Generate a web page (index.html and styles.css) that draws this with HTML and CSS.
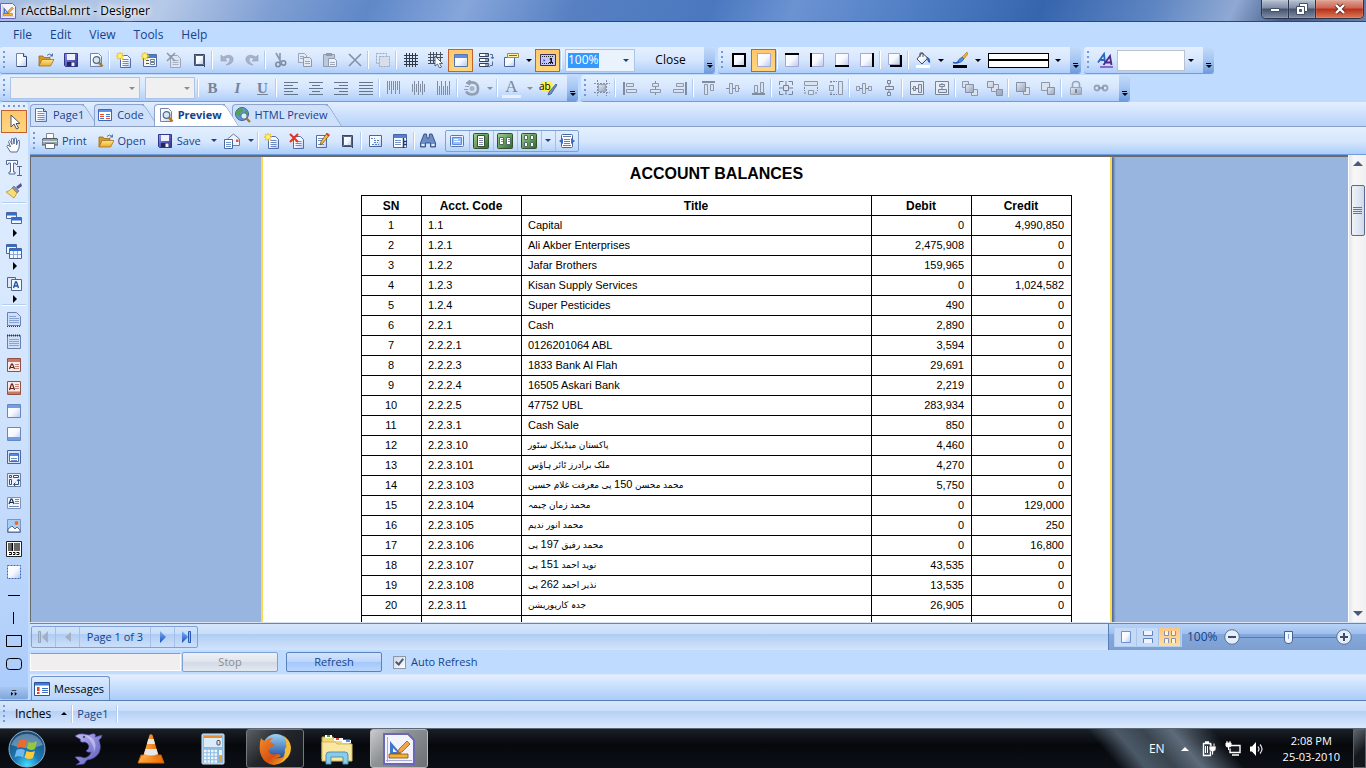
FILE: index.html
```html
<!DOCTYPE html>
<html lang="en">
<head>
    <meta charset="UTF-8">
    <meta name="viewport" content="width=device-width, initial-scale=1.0">
    <title>rAcctBal.mrt - Designer</title>
    <link rel="stylesheet" href="styles.css">
</head>
<body>
    <!-- icon sprite -->
    <svg class="sprite" width="0" height="0" aria-hidden="true">
        <defs>
            <linearGradient id="g-paper" x1="0" y1="0" x2="1" y2="1"><stop offset="0" stop-color="#fff"/><stop offset=".5" stop-color="#f6f9ff"/><stop offset="1" stop-color="#b5c8ea"/></linearGradient>
            <linearGradient id="g-gray" x1="0" y1="0" x2="1" y2="1"><stop offset="0" stop-color="#e6ebf3"/><stop offset="1" stop-color="#97a3b8"/></linearGradient>
            <linearGradient id="g-folder" x1="0" y1="0" x2="0" y2="1"><stop offset="0" stop-color="#ffe58a"/><stop offset="1" stop-color="#e9a92c"/></linearGradient>
            <linearGradient id="g-disk" x1="0" y1="0" x2="1" y2="1"><stop offset="0" stop-color="#8d95ec"/><stop offset="1" stop-color="#2a2f8f"/></linearGradient>
            <linearGradient id="g-blue" x1="0" y1="0" x2="0" y2="1"><stop offset="0" stop-color="#7db0f5"/><stop offset="1" stop-color="#1c4fb8"/></linearGradient>
            <linearGradient id="g-green" x1="0" y1="0" x2="1" y2="1"><stop offset="0" stop-color="#a5d095"/><stop offset="1" stop-color="#27692a"/></linearGradient>
            <radialGradient id="g-orb" cx=".5" cy=".95" r=".9"><stop offset="0" stop-color="#3fe0ff"/><stop offset=".4" stop-color="#1c7ab5"/><stop offset="1" stop-color="#1b4a78"/></radialGradient>
            <linearGradient id="g-dolphin" x1="0" y1="0" x2="1" y2="1"><stop offset="0" stop-color="#c3c0f6"/><stop offset=".5" stop-color="#8683d6"/><stop offset="1" stop-color="#5f5bb5"/></linearGradient>
            <linearGradient id="g-cone" x1="0" y1="0" x2="1" y2="0"><stop offset="0" stop-color="#ffad4d"/><stop offset="1" stop-color="#e76d00"/></linearGradient>
            <linearGradient id="g-sky" x1="0" y1="0" x2="0" y2="1"><stop offset="0" stop-color="#9bd4f7"/><stop offset="1" stop-color="#16408f"/></linearGradient>
            <linearGradient id="g-fox" x1="0" y1="0" x2="1" y2="1"><stop offset="0" stop-color="#f08a2c"/><stop offset=".6" stop-color="#d8500f"/><stop offset="1" stop-color="#f6b22e"/></linearGradient>
        </defs>

        <symbol id="page" viewBox="0 0 16 16"><path d="M3.500 1.500h7l3 3v10h-10z" fill="url(#g-paper)" stroke="#6f83ab"/><path d="M13.500 5v9.500H4" fill="none" stroke="#33466f"/><path d="M10.500 1.500v3h3" fill="#dfe8f7" stroke="#33466f"/></symbol>
        <symbol id="page-lines" viewBox="0 0 16 16"><path d="M2.500 1.500h8l3 3v10h-11z" fill="url(#g-paper)" stroke="#5875ab"/><path d="M10.500 1.500v3h3" fill="#cddcf5" stroke="#3c588f"/><path d="M4.500 4.500h5M4.500 6.500h7M4.500 8.500h7M4.500 10.500h7M4.500 12.500h7" stroke="#7292cc"/></symbol>
        <symbol id="star" viewBox="0 0 16 16"><path d="M4 0v8M0 4h8M1 1l6 6M7 1L1 7" stroke="#efc62a" stroke-width="1.400"/><circle cx="4" cy="4" r="2" fill="#fff27a"/></symbol>
        <symbol id="folder" viewBox="0 0 16 16"><path d="M1 4h4l1 1.500h6V8H4l-3 6z" fill="#d69a2b" stroke="#9b6a16" stroke-width=".8"/><path d="M4 7.500h12L12.500 14H1z" fill="url(#g-folder)" stroke="#a3731c" stroke-width=".8"/><path d="M9 3.500q2-3 5 0" fill="none" stroke="#5b76a5"/><path d="M15 1v3.500h-3.500z" fill="#5b76a5"/></symbol>
        <symbol id="disk" viewBox="0 0 16 16"><path d="M1.500 1.500h13v13h-12l-1-1z" fill="url(#g-disk)" stroke="#31378f"/><path d="M4 2h8v6H4z" fill="#eef1fb"/><path d="M4 10h8v4H4z" fill="#23275f"/><path d="M8.500 10.500h3V14h-3z" fill="#f2f4fb"/></symbol>
        <symbol id="page-find" viewBox="0 0 16 16"><path d="M2.500 1.500h8l3 3v10h-11z" fill="url(#g-paper)" stroke="#6f83ab"/><circle cx="8.500" cy="8" r="3.300" fill="#d4e8f6" stroke="#58677f" stroke-width="1.200"/><path d="M11 10.500l3.500 4" stroke="#b0762a" stroke-width="2.600"/></symbol>
        <symbol id="page-new" viewBox="0 0 16 16"><path d="M4.500 3.500h7l3 3v9h-10z" fill="url(#g-paper)" stroke="#506da5"/><path d="M6.500 7.500h6M6.500 9.500h6M6.500 11.500h6M6.500 13.500h6" stroke="#6c8bc4"/><use href="#star"/></symbol>
        <symbol id="form-new" viewBox="0 0 16 16"><path d="M2.500 2.500h13v12h-13z" fill="#f7f5e4" stroke="#4f6ea8"/><path d="M3 3h12v3H3z" fill="#477ed8"/><path d="M5 8.500h3M5 11.500h3" stroke="#555"/><path d="M9.500 7.500h4v2h-4zM9.500 10.500h4v2h-4z" fill="#fff" stroke="#6a7da3"/><use href="#star"/></symbol>
        <symbol id="page-del-off" viewBox="0 0 16 16"><path d="M4.500 3.500h7l3 3v9h-10z" fill="#dfe5ef" stroke="#9aa6b9"/><path d="M6.500 8.500h6M6.500 10.500h6M6.500 12.500h6" stroke="#a7b2c5"/><path d="M1 1l8 8M9 1L1 9" stroke="#8a97ab" stroke-width="1.500"/></symbol>
        <symbol id="page-del" viewBox="0 0 16 16"><path d="M4.500 3.500h7l3 3v9h-10z" fill="url(#g-paper)" stroke="#506da5"/><path d="M6.500 8.500h6M6.500 10.500h6M6.500 12.500h6" stroke="#6c8bc4"/><path d="M1 1l8 8M9 1L1 9" stroke="#e8321f" stroke-width="2"/></symbol>
        <symbol id="page-size" viewBox="0 0 16 16"><path d="M4.500 3.500h8v9h-8z" fill="url(#g-paper)" stroke="#54637f"/><path d="M3.500 2v11.500H14" fill="none" stroke="#3c4a66"/><path d="M3 2.500h10.500V15" fill="none" stroke="#3c4a66"/></symbol>
        <symbol id="undo" viewBox="0 0 16 16"><path d="M2 3v6h6L6 7q4-3 5 0 0 4-4 6 8-1 7-7Q12 1 4 5z" fill="#a9b3c5" stroke="#8f9bb1" stroke-width=".6"/></symbol>
        <symbol id="redo" viewBox="0 0 16 16"><path d="M14 3v6H8l2-2Q6 4 5 7q0 4 4 6-8-1-7-7 2-5 10-1z" fill="#a9b3c5" stroke="#8f9bb1" stroke-width=".6"/></symbol>
        <symbol id="cut" viewBox="0 0 16 16"><path d="M4 1l5 9M8 1v9" stroke="#8b97ab" stroke-width="1.600"/><circle cx="6" cy="12.500" r="2.200" fill="none" stroke="#7c899f" stroke-width="1.500"/><circle cx="11.500" cy="11" r="2.200" fill="none" stroke="#7c899f" stroke-width="1.500"/></symbol>
        <symbol id="copy" viewBox="0 0 16 16"><path d="M1.500 1.500h6l2 2v7h-8z" fill="#e4e9f2" stroke="#98a4b8"/><path d="M6.500 5.500h6l2 2v7h-8z" fill="#e4e9f2" stroke="#8b98ad"/><path d="M3 4.500h4M3 6.500h3M8 9.500h5M8 11.500h5" stroke="#9ba7bb"/></symbol>
        <symbol id="paste" viewBox="0 0 16 16"><path d="M1.500 2.500h11v12h-11z" fill="#bfc8d6" stroke="#8f9caf"/><path d="M4 1h6v3H4z" fill="#8f9caf"/><path d="M6.500 6.500h6l2 2v6h-8z" fill="#eef1f6" stroke="#8f9caf"/><path d="M8 10.500h5M8 12.500h5" stroke="#9ba7bb"/></symbol>
        <symbol id="cross" viewBox="0 0 16 16"><path d="M2 2l12 12M14 2L2 14" stroke="#8391a6" stroke-width="1.600"/></symbol>
        <symbol id="select-all" viewBox="0 0 16 16"><path d="M1.500 1.500h10v10h-10z" fill="none" stroke="#9aa6b9" stroke-dasharray="2 1"/><path d="M4.500 4.500h10v10h-10z" fill="#d8dfeb" stroke="#9aa6b9" stroke-dasharray="2 1"/></symbol>
        <symbol id="grid" viewBox="0 0 16 16"><path d="M3.500 1v14M6.500 1v14M9.500 1v14M12.500 1v14M1 3.500h14M1 6.500h14M1 9.500h14M1 12.500h14" stroke="#2e3846"/></symbol>
        <symbol id="grid-cursor" viewBox="0 0 16 16"><path d="M2.500 0v12M5.500 0v12M8.500 0v12M12.500 0v12M0 2.500h15M0 5.500h15M0 8.500h13M0 11.500h7" stroke="#46505f"/><path d="M7 4v10l2.500-2 2 4 2-1-2-3.500h3z" fill="#fff" stroke="#334566" stroke-width=".8"/></symbol>
        <symbol id="window" viewBox="0 0 16 16"><path d="M1.500 2.500h13v12h-13z" fill="url(#g-paper)" stroke="#5575ae"/><path d="M2 3h12v3H2z" fill="#5e8fe4"/></symbol>
        <symbol id="order" viewBox="0 0 16 16"><path d="M1.500 1.500h9v3h-9zM1.500 6.500h9v3h-9zM1.500 11.500h9v3h-9z" fill="#fff" stroke="#33435f"/><path d="M7 3h3M7 8h3M7 13h3" stroke="#33435f"/><path d="M12 2.500h2.500v4M12 13.500h2.500v-4M13 5l1.500 2L16 5M11 12l-1 1.500 2 1.500" fill="none" stroke="#55709f"/></symbol>
        <symbol id="tooltip" viewBox="0 0 16 16"><path d="M1.500 5.500h10v9h-10z" fill="url(#g-paper)" stroke="#49679e"/><path d="M4.500 1.500h11v4h-11z" fill="#fff3a5" stroke="#a78a3a"/><path d="M6 3.500h8" stroke="#7c6a38"/></symbol>
        <symbol id="ruler" viewBox="0 0 16 16"><path d="M.5 2.500h15v11H.500z" fill="#c4c7fb" stroke="#34345e"/><path d="M2 4.500h12M2 11.500h12" stroke="#222" stroke-dasharray="1 1"/><path d="M3.500 7l2 1.500-2 1.500z" fill="#2f55b5"/><path d="M10 6h2v4h1v1H9v-1h1.500V7.500H9.500z" fill="#111"/></symbol>
        <symbol id="b-all" viewBox="0 0 16 16"><path d="M2 2h12v12H2z" fill="url(#g-paper)" stroke="#000" stroke-width="2"/></symbol>
        <symbol id="b-none" viewBox="0 0 16 16"><path d="M1.500 1.500h13v13h-13z" fill="url(#g-paper)" stroke="#a5a8d4"/></symbol>
        <symbol id="b-top" viewBox="0 0 16 16"><use href="#b-none"/><path d="M1 2h14" stroke="#000" stroke-width="2"/></symbol>
        <symbol id="b-left" viewBox="0 0 16 16"><use href="#b-none"/><path d="M2 1v14" stroke="#000" stroke-width="2"/></symbol>
        <symbol id="b-bottom" viewBox="0 0 16 16"><use href="#b-none"/><path d="M1 14h14" stroke="#000" stroke-width="2"/></symbol>
        <symbol id="b-right" viewBox="0 0 16 16"><use href="#b-none"/><path d="M14 1v14" stroke="#000" stroke-width="2"/></symbol>
        <symbol id="b-shadow" viewBox="0 0 16 16"><path d="M3 3h12v12H3z" fill="#000"/><path d="M1.500 1.500h11v11h-11z" fill="url(#g-paper)" stroke="#a5a8d4"/></symbol>
        <symbol id="bucket" viewBox="0 0 16 16"><path d="M7 1l6 5-6 6-5-5z" fill="url(#g-paper)" stroke="#444f63"/><path d="M5 5V1h3v4" fill="none" stroke="#444f63"/><path d="M11 5q5 0 4 6-2 0-3-4z" fill="#2e61c2"/><path d="M1 13h14v3H1z" fill="#fff"/></symbol>
        <symbol id="pen" viewBox="0 0 16 16"><path d="M15 0l-5 5 2 2 4-5z" fill="#f0ac2d" stroke="#94661a" stroke-width=".5"/><path d="M10 5l2 2q-2 4-7 4 1-4 5-6z" fill="#4c8be0" stroke="#244a8d" stroke-width=".5"/><path d="M1 10.500q3 1 6-.5" fill="none" stroke="#1f55b2" stroke-width="1.500"/><path d="M1 13h14v3H1z" fill="#000"/></symbol>
        <symbol id="style-aa" viewBox="0 0 16 16"><path d="M1 10.500L7 2l1 8.500M3.500 8h4" fill="none" stroke="#2b63c0" stroke-width="1.800"/><path d="M6.500 13L13 4l1.500 9M9 10.500h5" fill="none" stroke="#4b2b85" stroke-width="1.800"/><path d="M3 15h13" stroke="#7b3fc4" stroke-width="1.500"/></symbol>
        <symbol id="al-left" viewBox="0 0 16 16"><path d="M1 2.500h14M1 5.500h9M1 8.500h14M1 11.500h9M1 14.500h14" stroke="#67758b"/></symbol>
        <symbol id="al-center" viewBox="0 0 16 16"><path d="M1 2.500h14M4 5.500h8M1 8.500h14M4 11.500h8M1 14.500h14" stroke="#67758b"/></symbol>
        <symbol id="al-right" viewBox="0 0 16 16"><path d="M1 2.500h14M6 5.500h9M1 8.500h14M6 11.500h9M1 14.500h14" stroke="#67758b"/></symbol>
        <symbol id="al-just" viewBox="0 0 16 16"><path d="M1 2.500h14M1 5.500h14M1 8.500h14M1 11.500h14M1 14.500h14" stroke="#67758b"/></symbol>
        <symbol id="va-top" viewBox="0 0 16 16"><path d="M1.500 1v13M3.500 1v9M5.500 1v13M7.500 1v9M9.500 1v13M11.500 1v9M13.500 1v13" stroke="#7f8ca1"/></symbol>
        <symbol id="va-mid" viewBox="0 0 16 16"><path d="M1.500 4v8M3.500 1v14M5.500 4v8M7.500 1v14M9.500 4v8M11.500 1v14M13.500 4v8" stroke="#7f8ca1"/></symbol>
        <symbol id="va-bot" viewBox="0 0 16 16"><path d="M1.500 1v14M3.500 6v9M5.500 1v14M7.500 6v9M9.500 1v14M11.500 6v9M13.500 1v14" stroke="#7f8ca1"/></symbol>
        <symbol id="rotate" viewBox="0 0 16 16"><path d="M5 2.500q9-1 9 6 0 6-6 6-4 0-6-3" fill="none" stroke="#929eb2" stroke-width="2.600"/><circle cx="8" cy="8.500" r="2.500" fill="#a8b3c5"/><path d="M6 0v5L2 3zM1 6.500h4M0 9.500h4" fill="#929eb2" stroke="#929eb2"/></symbol>
        <symbol id="highlight" viewBox="0 0 16 16"><path d="M0 1h10l2 4-2 6H1z" fill="#fff04d"/><path d="M15 4l1 1-6 9-3 1 1-3z" fill="#6c8fc5" stroke="#334a78" stroke-width=".7"/></symbol>
        <symbol id="size-grid" viewBox="0 0 16 16"><path d="M3.500 0v16M12.500 0v16M0 3.500h16M0 12.500h16" stroke="#8391a8" stroke-dasharray="2 1"/><path d="M4.500 4.500h7v7h-7z" fill="url(#g-gray)" stroke="#97a3b8"/></symbol>
        <symbol id="o-left" viewBox="0 0 16 16"><path d="M2 2v13" stroke="#7f8ca1" stroke-width="2"/><path d="M4.500 3.500h7v3h-7zM4.500 9.500h10v3h-10z" fill="#dde3ed" stroke="#8b98ad"/></symbol>
        <symbol id="o-center" viewBox="0 0 16 16"><path d="M8.500 1v14" stroke="#7f8ca1"/><path d="M5.500 3.500h6v3h-6zM3.500 9.500h10v3h-10z" fill="#dde3ed" stroke="#8b98ad"/></symbol>
        <symbol id="o-right" viewBox="0 0 16 16"><path d="M14 2v13" stroke="#7f8ca1" stroke-width="2"/><path d="M4.500 3.500h7v3h-7zM1.500 9.500h10v3h-10z" fill="#dde3ed" stroke="#8b98ad"/></symbol>
        <symbol id="o-top" viewBox="0 0 16 16"><path d="M2 2h13" stroke="#7f8ca1" stroke-width="2"/><path d="M4.500 4.500h3v10h-3zM10.500 4.500h3v6h-3z" fill="#dde3ed" stroke="#8b98ad"/></symbol>
        <symbol id="o-mid" viewBox="0 0 16 16"><path d="M1 8.500h14" stroke="#7f8ca1"/><path d="M4.500 3.500h3v10h-3zM10.500 5.500h3v6h-3z" fill="#dde3ed" stroke="#8b98ad"/></symbol>
        <symbol id="o-bot" viewBox="0 0 16 16"><path d="M2 14h13" stroke="#7f8ca1" stroke-width="2"/><path d="M4.500 5.500h3v7h-3zM10.500 2.500h3v10h-3z" fill="#dde3ed" stroke="#8b98ad"/></symbol>
        <symbol id="same-size" viewBox="0 0 16 16"><path d="M1.500 5v-3.500h4M10.500 1.500h4V5M14.500 11v3.500h-4M5.500 14.500h-4V11M8 1v4M8 11v4M1 8h4M11 8h4" fill="none" stroke="#76849a"/><path d="M5.500 5.500h5v5h-5z" fill="#dde3ed" stroke="#76849a"/></symbol>
        <symbol id="same-w" viewBox="0 0 16 16"><path d="M1.500 1.500h13v4h-13z" fill="#dde3ed" stroke="#8b98ad"/><path d="M1.500 7v4M14.500 7v4M1 13h3M12 13h3" stroke="#76849a" stroke-dasharray="2 1"/><path d="M5.500 10.500h5v4h-5z" fill="#dde3ed" stroke="#8b98ad"/></symbol>
        <symbol id="same-h" viewBox="0 0 16 16"><path d="M10.500 1.500h4v13h-4z" fill="#dde3ed" stroke="#8b98ad"/><path d="M2 1.500h7M2 14.500h7M3 1v3M3 12v3" stroke="#76849a" stroke-dasharray="2 1"/><path d="M1.500 5.500h4v5h-4z" fill="#dde3ed" stroke="#8b98ad"/></symbol>
        <symbol id="space-h" viewBox="0 0 16 16"><path d="M0 8.500h16" stroke="#76849a"/><path d="M.5 6.500h3v4h-3zM6.500 3.500h3v10h-3zM12.500 6.500h3v4h-3z" fill="#dde3ed" stroke="#8b98ad"/></symbol>
        <symbol id="space-v" viewBox="0 0 16 16"><path d="M8 0v16" stroke="#76849a"/><path d="M6.500.5h3v3h-3zM4.500 6.500h8v3h-8zM6.500 12.500h3v3h-3z" fill="#dde3ed" stroke="#76849a"/></symbol>
        <symbol id="ctr-h" viewBox="0 0 16 16"><path d="M1.500 1.500h13v13h-13z" fill="#e8edf5" stroke="#76849a"/><path d="M3 8.500h10" stroke="#76849a"/><path d="M4.500 6.500h2v4h-2zM9.500 4.500h3v8h-3z" fill="#dde3ed" stroke="#76849a"/></symbol>
        <symbol id="ctr-v" viewBox="0 0 16 16"><path d="M1.500 1.500h13v13h-13z" fill="#e8edf5" stroke="#76849a"/><path d="M8 3v10" stroke="#76849a"/><path d="M5.500 4.500h5v2h-5zM4.500 9.500h8v3h-8z" fill="#dde3ed" stroke="#76849a"/></symbol>
        <symbol id="to-front" viewBox="0 0 16 16"><path d="M.5 1.500h6v6h-6zM9.500 9.500h6v6h-6z" fill="#dde3ed" stroke="#8b98ad"/><path d="M3.500 4.500h8v8h-8z" fill="url(#g-gray)" stroke="#8390a8"/></symbol>
        <symbol id="to-back" viewBox="0 0 16 16"><path d="M4.500 4.500h7v7h-7z" fill="#dde3ed" stroke="#8b98ad"/><path d="M.5 1.500h6v6h-6zM9.500 9.500h6v6h-6z" fill="url(#g-gray)" stroke="#8390a8"/></symbol>
        <symbol id="forward" viewBox="0 0 16 16"><path d="M8.500 7.500h6v7h-6z" fill="#dde3ed" stroke="#8b98ad"/><path d="M1.500 2.500h9v9h-9z" fill="url(#g-gray)" stroke="#8390a8"/></symbol>
        <symbol id="backward" viewBox="0 0 16 16"><path d="M1.500 2.500h8v8h-8z" fill="#dde3ed" stroke="#8b98ad"/><path d="M7.500 7.500h7v7h-7z" fill="url(#g-gray)" stroke="#8390a8"/></symbol>
        <symbol id="lock" viewBox="0 0 16 16"><path d="M4.500 7V4.500q0-3 3.500-3t3.500 3V7" fill="none" stroke="#98a4b8" stroke-width="1.600"/><path d="M2.500 7.500h11v7h-11z" fill="url(#g-gray)" stroke="#98a4b8"/><path d="M7.500 9.500h1v3h-1z" stroke="#76849a"/></symbol>
        <symbol id="link" viewBox="0 0 16 16"><circle cx="4" cy="8" r="2.500" fill="none" stroke="#98a4b8" stroke-width="1.800"/><circle cx="12" cy="8" r="2.500" fill="none" stroke="#98a4b8" stroke-width="1.800"/><path d="M5 8h6" stroke="#8390a8" stroke-width="1.500"/></symbol>

        <symbol id="t-arrow" viewBox="0 0 16 16"><path d="M5 1v12l3-3 2.500 5 2-1L10 9.500h4z" fill="#fff" stroke="#40547d"/></symbol>
        <symbol id="t-hand" viewBox="0 0 16 16"><path d="M4.500 15L1 9.500q0-2 2-1L4.500 10 2.500 4.500q1-2 2 0l1.500 3-.5-5.500q1-2 2 0l.5 5 .5-5.500q1.500-1.500 2 .5V8l1.500-4.500q1.500-1 1.500 1L13 11l-2 4z" fill="#fff" stroke="#566d98"/></symbol>
        <symbol id="t-text" viewBox="0 0 16 16"><path d="M.5.500h11v4H10l-.5-1.500h-2v9H9v2H3v-2h1.500V3h-2L2 4.500H.500z" fill="#fff" stroke="#55698f"/><path d="M11 6.500h5M13.500 7v8M11 15.500h5" stroke="#55698f"/></symbol>
        <symbol id="t-brush" viewBox="0 0 16 16"><path d="M15 0l1 3-4 3-2-2z" fill="#5b4f9e"/><path d="M8 3l5 5-2 2-5-5z" fill="#8b8fb5" stroke="#5e6b88" stroke-width=".7"/><path d="M6 5l5 5-3 5-8-6q4-1 6-4z" fill="#f8dc74" stroke="#a88529" stroke-width=".7"/></symbol>
        <symbol id="t-bands" viewBox="0 0 16 16"><path d="M.5 2.500h10v6H.500zM5.500 7.500h10v6h-10z" fill="#f3f7ff" stroke="#49679e"/><path d="M1 3h9v2.500H1zM6 8h9v2.500H6z" fill="#2f6cd6"/></symbol>
        <symbol id="t-cross" viewBox="0 0 16 16"><path d="M.5 1.500h10v9H.500z" fill="#f3f7ff" stroke="#49679e"/><path d="M1 2h9v2H1z" fill="#2f6cd6"/><path d="M3.500 5.500h12v10h-12z" fill="#f3f7ff" stroke="#49679e"/><path d="M4 6h11v2H4z" fill="#2f6cd6"/><path d="M4 11.500h11M7.500 8v7M11.500 8v7" stroke="#8fa9d6"/></symbol>
        <symbol id="t-comp" viewBox="0 0 16 16"><path d="M1.500 1.500h8v10h-8z" fill="#dbe7fa" stroke="#49679e"/><path d="M5.500 3.500h10v11h-10z" fill="#f3f7ff" stroke="#49679e"/><path d="M7.500 12l2-6h1l2 6M8 10h4" stroke="#1d4f9e" fill="none" stroke-width="1.300"/></symbol>
        <symbol id="t-head" viewBox="0 0 16 16"><path d="M1.500 1.500h9l4 4v9h-13z" fill="#cfdff7" stroke="#6782b2"/><path d="M3 5.500h7M3 7.500h10M3 9.500h10M3 11.500h10" stroke="#89a4d2"/><path d="M1 15.500h14" stroke="#243a63" stroke-dasharray="1 1"/></symbol>
        <symbol id="t-foot" viewBox="0 0 16 16"><path d="M1.500 1.500h13v13h-13z" fill="#cfdff7" stroke="#6782b2"/><path d="M3 5.500h10M3 7.500h10M3 9.500h10M3 11.500h10" stroke="#89a4d2"/><path d="M1 1.500h14" stroke="#243a63" stroke-width="2" stroke-dasharray="1 1"/></symbol>
        <symbol id="t-red" viewBox="0 0 16 16"><path d="M1.500 1.500h13v13h-13z" fill="#f8ece8" stroke="#8f5149"/><path d="M2 2h12v3H2z" fill="#c9795f"/><path d="M3.500 12l2-5h1l2 5M4 10.500h4" fill="none" stroke="#6e1d14" stroke-width="1.200"/><path d="M9 7.500h4M9 9.500h4M9 11.500h4" stroke="#c3847a"/></symbol>
        <symbol id="t-redfoot" viewBox="0 0 16 16"><path d="M1.500 1.500h13v13h-13z" fill="#f8ece8" stroke="#8f5149"/><path d="M2 11.500h12V14H2z" fill="#c9795f"/><path d="M3.500 10l2-6h1l2 6M4 8.500h4" fill="none" stroke="#6e1d14" stroke-width="1.200"/><path d="M9 4.500h4M9 6.500h4M9 8.500h4" stroke="#c3847a"/></symbol>
        <symbol id="t-data" viewBox="0 0 16 16"><path d="M1.500 1.500h13v13h-13z" fill="url(#g-paper)" stroke="#6b86b8"/><path d="M2 2h12v3H2z" fill="#6c9ff0"/></symbol>
        <symbol id="t-datafoot" viewBox="0 0 16 16"><path d="M1.500 1.500h13v13h-13z" fill="url(#g-paper)" stroke="#6b86b8"/><path d="M2 11h12v3H2z" fill="#6c9ff0"/></symbol>
        <symbol id="t-panel" viewBox="0 0 16 16"><path d="M1.500 1.500h13v13h-13z" fill="#d5e3f8" stroke="#49679e"/><path d="M3.500 4.500h9v8h-9z" fill="#fff" stroke="#3f6fc2"/><path d="M4 5h8v2H4z" fill="#4f8aea"/><path d="M5 9.500h6M5 11.500h6" stroke="#6c8bc4"/></symbol>
        <symbol id="t-sub" viewBox="0 0 16 16"><path d="M1.500 1.500h13v13h-13z" fill="#eaf1fc" stroke="#6b7f9f"/><path d="M3.500 3.500h2v2h-2zM7.500 3.500h5v2h-5zM3.500 7.500h2v5h-2z" fill="#fff" stroke="#33507f"/><path d="M8 12.500h4.500V8M9.500 10.500l-2 2 2 2M11 9l1.500-2L14 9" fill="none" stroke="#33507f"/></symbol>
        <symbol id="t-rich" viewBox="0 0 16 16"><path d="M1.500 2.500h13v11h-13z" fill="#f2f6fd" stroke="#7d93b8"/><path d="M3 9l2-5h1l2 5M3.500 7.500h4" fill="none" stroke="#1c2f52" stroke-width="1.200"/><path d="M9 4.500h4M9 6.500h4M9 8.500h4M3 11.500h10" stroke="#6f8abb"/></symbol>
        <symbol id="t-image" viewBox="0 0 16 16"><path d="M1.500 1.500h13v13h-13z" fill="#a8cdf5" stroke="#7d93b8"/><circle cx="10.500" cy="5" r="2" fill="#f0692a"/><path d="M2 11l4-3 3 3 2-2 3 3v2H2z" fill="#fff" stroke="#2d4d85" stroke-width=".8"/></symbol>
        <symbol id="t-bar" viewBox="0 0 16 16"><path d="M.5.5h15v15H.500z" fill="#fff" stroke="#222"/><path d="M3 2v8M5 2v8M6.500 2v8M9 2v8M11 2v8M13 2v8" stroke="#000" stroke-width="1.200"/><path d="M3 11.500h2.500v2H3M7 11.500h2v2H7M10.500 11.500H13v2h-2.500" stroke="#000" fill="none"/></symbol>
        <symbol id="t-shape" viewBox="0 0 16 16"><path d="M1.500 1.500h13v13h-13z" fill="url(#g-paper)" stroke="#3c66bb" stroke-dasharray="2 1"/></symbol>
        <symbol id="t-hline" viewBox="0 0 16 16"><path d="M2 8.500h12" stroke="#000"/></symbol>
        <symbol id="t-vline" viewBox="0 0 16 16"><path d="M7.500 2v12" stroke="#000"/></symbol>
        <symbol id="t-rect" viewBox="0 0 16 16"><path d="M.5 2.500h15v11H.500z" fill="none" stroke="#000"/></symbol>
        <symbol id="t-round" viewBox="0 0 16 16"><rect x=".5" y="2.500" width="15" height="11" rx="3" fill="none" stroke="#000"/></symbol>

        <symbol id="code" viewBox="0 0 16 16"><path d="M1.500 2.500h13v11h-13z" fill="#fff" stroke="#3f66b5"/><path d="M2 3h12v2H2z" fill="#5e93ec"/><path d="M3 7.500h4M3 9.500h4M9 11.500h4" stroke="#e04c2f"/><path d="M9 7.500h4M9 9.500h4M3 11.500h4" stroke="#4473c8"/></symbol>
        <symbol id="globe" viewBox="0 0 16 16"><circle cx="7" cy="7" r="6.500" fill="#5b97dd" stroke="#36669f"/><path d="M3 2q4-2 5 1 0 2-3 3 1 3-1 4-3-3-3-5zM10 3q3 1 3 5-2 1-3-2z" fill="#52a43c"/><circle cx="9" cy="9" r="3.200" fill="#dcecf8" stroke="#58677f"/><path d="M11.500 11.500L15 15" stroke="#b0762a" stroke-width="2.400"/></symbol>
        <symbol id="printer" viewBox="0 0 16 16"><path d="M4.500.5h7v5h-7z" fill="#fff" stroke="#7c8799"/><path d="M1 5.500h14l1 2v4.500H0V7.500z" fill="#9ca4b2" stroke="#505a6b"/><path d="M1 8.500h14" stroke="#dfe3ea"/><path d="M3.500 10.500h9v5h-9z" fill="#fff" stroke="#666f80"/><path d="M12 7h2v1h-2z" fill="#6cd44e"/></symbol>
        <symbol id="mail" viewBox="0 0 16 16"><path d="M3.500 6L9.500 1l6 5v6.500h-12z" fill="#eef2fa" stroke="#6b7f9f"/><path d="M12 6.500h2.500V9H12z" fill="#e65236"/><path d="M.5 6.500h8v9h-8z" fill="#fff" stroke="#49679e"/><path d="M2 9.500h5M2 11.500h5M2 13.500h5" stroke="#7292cc"/></symbol>
        <symbol id="page-edit" viewBox="0 0 16 16"><path d="M2.500 2.500h10v12h-10z" fill="url(#g-paper)" stroke="#506da5"/><path d="M4 5.500h6M4 7.500h5M4 11.500h6" stroke="#7292cc"/><path d="M13 0l2.500 2-6.500 8-3 2 1-3.500z" fill="#f2bd45" stroke="#6d4a18" stroke-width=".7"/><path d="M13 0l2.500 2-1 1.500L12 1.500z" fill="#d8403a"/></symbol>
        <symbol id="params" viewBox="0 0 16 16"><path d="M2.500 2.500h12v11h-12z" fill="url(#g-paper)" stroke="#49679e"/><path d="M4 5.500h4M7 7.500h5M7 9.500h4M5 11.500h7" stroke="#567fc8" stroke-dasharray="2 1"/></symbol>
        <symbol id="thumbs" viewBox="0 0 16 16"><path d="M1.500 1.500h13v13h-13z" fill="#fff" stroke="#49679e"/><path d="M2 2h12v3H2z" fill="#4f83da"/><path d="M3 7.500h6M3 9.500h6M3 11.500h6" stroke="#7292cc"/><path d="M11.500 5v10M12 8.500h3M12 11.500h3" stroke="#243a63" stroke-width="1.500"/></symbol>
        <symbol id="find" viewBox="0 0 16 16"><path d="M4 1h2.500l.5 4h2l.5-4H12l3.500 9v4h-5v-4h-5v4h-5v-4z" fill="#6d8cc6" stroke="#223d75" stroke-width=".8"/><path d="M1.500 11h3v2h-3zM11.500 11h3v2h-3z" fill="#dfe9fb"/></symbol>
        <symbol id="v-single" viewBox="0 0 16 16"><rect x="1.500" y="2.500" width="13" height="11" rx="1" fill="#eaf2ff" stroke="#5b76a8"/><path d="M3.500 4.500h9v7h-9z" fill="#9cc1fa" stroke="#5a8be0"/><path d="M5 6.500h4M5 8.500h6" stroke="#fff"/></symbol>
        <symbol id="v-page" viewBox="0 0 16 16"><rect x=".5" y=".5" width="15" height="15" rx="1" fill="url(#g-green)" stroke="#34512f"/><path d="M4.500 2.500h7v11h-7z" fill="#fff" stroke="#34512f"/><path d="M6 5.500h4M6 7.500h4M6 9.500h4M6 11.500h4" stroke="#88a"/></symbol>
        <symbol id="v-two" viewBox="0 0 16 16"><rect x=".5" y=".5" width="15" height="15" rx="1" fill="url(#g-green)" stroke="#34512f"/><path d="M2.500 4.500h4v7h-4zM9.500 4.500h4v7h-4z" fill="#fff" stroke="#4d6b60"/><path d="M4 6.500h2M4 8.500h2M11 6.500h2M11 8.500h2" stroke="#88a"/></symbol>
        <symbol id="v-many" viewBox="0 0 16 16"><rect x=".5" y=".5" width="15" height="15" rx="1" fill="url(#g-green)" stroke="#34512f"/><path d="M3.500 2.500h3v4h-3zM9.500 2.500h3v4h-3zM3.500 9.500h3v4h-3zM9.500 9.500h3v4h-3z" fill="#fff" stroke="#4d6b60"/></symbol>
        <symbol id="v-width" viewBox="0 0 16 16"><rect x="2.500" y="1.500" width="11" height="13" rx="1" fill="#fff" stroke="#49679e"/><path d="M4 3.500h8M4 12.500h8M5 6.500h6M5 8.500h6M5 10.500h6" stroke="#6b7fa5"/><path d="M0 8l4-3v6zM16 8l-4-3v6z" fill="#3d6cc4"/></symbol>
        <symbol id="messages" viewBox="0 0 16 16"><path d="M.5 1.500h15v13H.500z" fill="#fff" stroke="#24529f"/><path d="M1 2h14v2.500H1z" fill="#3c7ada"/><path d="M3 6h2.500v4H3zM3 11h2.500v2H3z" fill="#e2411e"/><path d="M8 7.500h6M8 9.500h6M8 11.500h6" stroke="#3f6fc2"/></symbol>

        <symbol id="designer" viewBox="0 0 32 32"><path d="M1 1h24l6 6v24H1z" fill="#f3f3fc" stroke="#6a68b4" stroke-width="2"/><path d="M7 8v14h12z" fill="#3f74cf"/><path d="M10 15v4h4z" fill="#f3f3fc"/><path d="M6 21h19v4H6z" fill="#f2b233" stroke="#7f5412" stroke-width=".8"/><path d="M24 8l3 3-8 8-4 1 1-4z" fill="#f0a54a" stroke="#9a5d1b" stroke-width=".8"/><path d="M3 27.500h26M4.500 4v25" stroke="#a9a8d8"/></symbol>
    </svg>

    <div class="app">
        <header class="titlebar">
            <svg class="ico"><use href="#designer"/></svg>
            <span class="caption">rAcctBal.mrt - Designer</span>
            <div class="win-buttons">
                <button aria-label="Minimize"><svg width="12" height="12" viewBox="0 0 12 12"><path d="M1.500 5.500h9v3h-9z" fill="#fff" stroke="#44506a"/></svg></button>
                <button aria-label="Restore"><svg width="12" height="12" viewBox="0 0 12 12"><path d="M3.500.5h8v8h-8z" fill="#fff" stroke="#44506a"/><path d="M.5 3.500h8v8h-8z" fill="#fff" stroke="#44506a"/><path d="M3.500 6.500h2v2h-2z" fill="#667" stroke="#44506a"/></svg></button>
                <button class="close" aria-label="Close window"><svg width="12" height="12" viewBox="0 0 12 12"><path d="M2 2l8 8M10 2l-8 8" stroke="#5a2a2a" stroke-width="4"/><path d="M2 2l8 8M10 2l-8 8" stroke="#fff" stroke-width="2.400"/></svg></button>
            </div>
        </header>

        <nav class="menubar">
            <button>File</button>
            <button>Edit</button>
            <button>View</button>
            <button>Tools</button>
            <button>Help</button>
        </nav>

        <div class="bars">
            <div class="bar-row">
                <div class="toolbar">
                    <span class="grip"></span>
                    <button class="tb" aria-label="New"><svg class="ico"><use href="#page"/></svg></button>
                    <button class="tb" aria-label="Open report"><svg class="ico"><use href="#folder"/></svg></button>
                    <button class="tb" aria-label="Save report"><svg class="ico"><use href="#disk"/></svg></button>
                    <button class="tb" aria-label="Preview report"><svg class="ico"><use href="#page-find"/></svg></button>
                    <span class="sep"></span>
                    <button class="tb" aria-label="New page"><svg class="ico"><use href="#page-new"/></svg></button>
                    <button class="tb" aria-label="New form"><svg class="ico"><use href="#form-new"/></svg></button>
                    <button class="tb" aria-label="Delete page" disabled><svg class="ico"><use href="#page-del-off"/></svg></button>
                    <button class="tb" aria-label="Page setup"><svg class="ico"><use href="#page-size"/></svg></button>
                    <span class="sep"></span>
                    <button class="tb" aria-label="Undo" disabled><svg class="ico"><use href="#undo"/></svg></button>
                    <button class="tb" aria-label="Redo" disabled><svg class="ico"><use href="#redo"/></svg></button>
                    <span class="sep"></span>
                    <button class="tb" aria-label="Cut" disabled><svg class="ico"><use href="#cut"/></svg></button>
                    <button class="tb" aria-label="Copy" disabled><svg class="ico"><use href="#copy"/></svg></button>
                    <button class="tb" aria-label="Paste" disabled><svg class="ico"><use href="#paste"/></svg></button>
                    <button class="tb" aria-label="Delete" disabled><svg class="ico"><use href="#cross"/></svg></button>
                    <span class="sep"></span>
                    <button class="tb" aria-label="Select all" disabled><svg class="ico"><use href="#select-all"/></svg></button>
                    <span class="sep"></span>
                    <button class="tb" aria-label="Show grid"><svg class="ico"><use href="#grid"/></svg></button>
                    <button class="tb" aria-label="Align to grid"><svg class="ico"><use href="#grid-cursor"/></svg></button>
                    <button class="tb on" aria-label="Show headers"><svg class="ico"><use href="#window"/></svg></button>
                    <button class="tb" aria-label="Show order"><svg class="ico"><use href="#order"/></svg></button>
                    <button class="tb" aria-label="Quick info"><svg class="ico"><use href="#tooltip"/></svg></button>
                    <button class="drop" aria-label="Quick info options"></button>
                    <button class="tb on" aria-label="Show rulers"><svg class="ico"><use href="#ruler"/></svg></button>
                    <span class="sep"></span>
                    <span class="zoom-box"><input type="text" value="100%" aria-label="Zoom"><button class="drop navy" aria-label="Zoom list"></button></span>
                    <button class="close-btn">Close</button>
                    <button class="more" aria-label="More standard buttons"></button>
                </div>
                <div class="toolbar">
                    <span class="grip"></span>
                    <button class="tb" aria-label="All borders"><svg class="ico"><use href="#b-all"/></svg></button>
                    <button class="tb on" aria-label="No border"><svg class="ico"><use href="#b-none"/></svg></button>
                    <span class="sep"></span>
                    <button class="tb" aria-label="Top border"><svg class="ico"><use href="#b-top"/></svg></button>
                    <button class="tb" aria-label="Left border"><svg class="ico"><use href="#b-left"/></svg></button>
                    <button class="tb" aria-label="Bottom border"><svg class="ico"><use href="#b-bottom"/></svg></button>
                    <button class="tb" aria-label="Right border"><svg class="ico"><use href="#b-right"/></svg></button>
                    <span class="sep"></span>
                    <button class="tb" aria-label="Shadow"><svg class="ico"><use href="#b-shadow"/></svg></button>
                    <span class="sep"></span>
                    <button class="tb" aria-label="Fill"><svg class="ico"><use href="#bucket"/></svg></button>
                    <button class="drop" aria-label="Fill colors"></button>
                    <button class="tb" aria-label="Border color"><svg class="ico"><use href="#pen"/></svg></button>
                    <button class="drop" aria-label="Border colors"></button>
                    <button class="line-style" aria-label="Line style"><span></span></button>
                    <button class="drop" aria-label="Line styles"></button>
                    <button class="more spaced" aria-label="More border buttons"></button>
                </div>
                <div class="toolbar">
                    <span class="grip"></span>
                    <button class="tb" aria-label="Style designer"><svg class="ico"><use href="#style-aa"/></svg></button>
                    <input class="style-box" type="text" aria-label="Style">
                    <button class="drop" aria-label="Styles"></button>
                    <button class="more spaced" aria-label="More style buttons"></button>
                </div>
            </div>

            <div class="bar-row">
                <div class="toolbar">
                    <span class="grip"></span>
                    <span class="combo font"><select aria-label="Font" disabled><option></option></select></span>
                    <span class="combo size"><select aria-label="Font size" disabled><option></option></select></span>
                    <span class="sep"></span>
                    <button class="tb letter" disabled><b>B</b></button>
                    <button class="tb letter" disabled><i>I</i></button>
                    <button class="tb letter" disabled><u>U</u></button>
                    <span class="sep"></span>
                    <button class="tb" aria-label="Align left" disabled><svg class="ico"><use href="#al-left"/></svg></button>
                    <button class="tb" aria-label="Align center" disabled><svg class="ico"><use href="#al-center"/></svg></button>
                    <button class="tb" aria-label="Align right" disabled><svg class="ico"><use href="#al-right"/></svg></button>
                    <button class="tb" aria-label="Justify" disabled><svg class="ico"><use href="#al-just"/></svg></button>
                    <span class="sep"></span>
                    <button class="tb" aria-label="Align text top" disabled><svg class="ico"><use href="#va-top"/></svg></button>
                    <button class="tb" aria-label="Align text middle" disabled><svg class="ico"><use href="#va-mid"/></svg></button>
                    <button class="tb" aria-label="Align text bottom" disabled><svg class="ico"><use href="#va-bot"/></svg></button>
                    <span class="sep"></span>
                    <button class="tb" aria-label="Rotate text" disabled><svg class="ico"><use href="#rotate"/></svg></button>
                    <button class="drop" aria-label="Angles" disabled></button>
                    <span class="sep"></span>
                    <button class="tb letter color" disabled>A</button>
                    <button class="drop" aria-label="Text colors" disabled></button>
                    <button class="tb marker" aria-label="Text brush"><svg class="ico"><use href="#highlight"/></svg><span>ab</span></button>
                    <button class="more spaced" aria-label="More text buttons"></button>
                </div>
                <div class="toolbar">
                    <span class="grip"></span>
                    <button class="tb" aria-label="Align to grid lines" disabled><svg class="ico"><use href="#size-grid"/></svg></button>
                    <span class="sep"></span>
                    <button class="tb" aria-label="Align lefts" disabled><svg class="ico"><use href="#o-left"/></svg></button>
                    <button class="tb" aria-label="Align centers" disabled><svg class="ico"><use href="#o-center"/></svg></button>
                    <button class="tb" aria-label="Align rights" disabled><svg class="ico"><use href="#o-right"/></svg></button>
                    <span class="sep"></span>
                    <button class="tb" aria-label="Align tops" disabled><svg class="ico"><use href="#o-top"/></svg></button>
                    <button class="tb" aria-label="Align middles" disabled><svg class="ico"><use href="#o-mid"/></svg></button>
                    <button class="tb" aria-label="Align bottoms" disabled><svg class="ico"><use href="#o-bot"/></svg></button>
                    <span class="sep"></span>
                    <button class="tb" aria-label="Same size" disabled><svg class="ico"><use href="#same-size"/></svg></button>
                    <button class="tb" aria-label="Same width" disabled><svg class="ico"><use href="#same-w"/></svg></button>
                    <button class="tb" aria-label="Same height" disabled><svg class="ico"><use href="#same-h"/></svg></button>
                    <span class="sep"></span>
                    <button class="tb" aria-label="Equal horizontal spacing" disabled><svg class="ico"><use href="#space-h"/></svg></button>
                    <button class="tb" aria-label="Equal vertical spacing" disabled><svg class="ico"><use href="#space-v"/></svg></button>
                    <span class="sep"></span>
                    <button class="tb" aria-label="Center horizontally" disabled><svg class="ico"><use href="#ctr-h"/></svg></button>
                    <button class="tb" aria-label="Center vertically" disabled><svg class="ico"><use href="#ctr-v"/></svg></button>
                    <span class="sep"></span>
                    <button class="tb" aria-label="Bring to front" disabled><svg class="ico"><use href="#to-front"/></svg></button>
                    <button class="tb" aria-label="Send to back" disabled><svg class="ico"><use href="#to-back"/></svg></button>
                    <span class="sep"></span>
                    <button class="tb" aria-label="Move forward" disabled><svg class="ico"><use href="#forward"/></svg></button>
                    <button class="tb" aria-label="Move backward" disabled><svg class="ico"><use href="#backward"/></svg></button>
                    <span class="sep"></span>
                    <button class="tb" aria-label="Lock" disabled><svg class="ico"><use href="#lock"/></svg></button>
                    <button class="tb" aria-label="Link" disabled><svg class="ico"><use href="#link"/></svg></button>
                    <button class="more spaced" aria-label="More layout buttons"></button>
                </div>
            </div>
        </div>

        <div class="workspace">
            <aside class="toolbox">
                <span class="grip-h"></span>
                <button class="tool on" aria-label="Select"><svg class="ico"><use href="#t-arrow"/></svg></button>
                <button class="tool" aria-label="Hand"><svg class="ico"><use href="#t-hand"/></svg></button>
                <button class="tool" aria-label="Edit text"><svg class="ico"><use href="#t-text"/></svg></button>
                <button class="tool" aria-label="Copy style"><svg class="ico"><use href="#t-brush"/></svg></button>
                <span class="sep-h"></span>
                <button class="tool sub" aria-label="Bands"><svg class="ico"><use href="#t-bands"/></svg></button>
                <button class="tool sub" aria-label="Cross bands"><svg class="ico"><use href="#t-cross"/></svg></button>
                <button class="tool sub" aria-label="Components"><svg class="ico"><use href="#t-comp"/></svg></button>
                <span class="sep-h"></span>
                <button class="tool" aria-label="Report title"><svg class="ico"><use href="#t-head"/></svg></button>
                <button class="tool" aria-label="Report summary"><svg class="ico"><use href="#t-foot"/></svg></button>
                <button class="tool" aria-label="Header"><svg class="ico"><use href="#t-red"/></svg></button>
                <button class="tool" aria-label="Footer"><svg class="ico"><use href="#t-redfoot"/></svg></button>
                <button class="tool" aria-label="Group header"><svg class="ico"><use href="#t-data"/></svg></button>
                <button class="tool" aria-label="Group footer"><svg class="ico"><use href="#t-datafoot"/></svg></button>
                <button class="tool" aria-label="Data band"><svg class="ico"><use href="#t-panel"/></svg></button>
                <button class="tool" aria-label="Cross tab"><svg class="ico"><use href="#t-sub"/></svg></button>
                <button class="tool" aria-label="Text"><svg class="ico"><use href="#t-rich"/></svg></button>
                <button class="tool" aria-label="Image"><svg class="ico"><use href="#t-image"/></svg></button>
                <button class="tool" aria-label="Bar code"><svg class="ico"><use href="#t-bar"/></svg></button>
                <button class="tool" aria-label="Panel"><svg class="ico"><use href="#t-shape"/></svg></button>
                <button class="tool" aria-label="Horizontal line"><svg class="ico"><use href="#t-hline"/></svg></button>
                <button class="tool" aria-label="Vertical line"><svg class="ico"><use href="#t-vline"/></svg></button>
                <button class="tool" aria-label="Rectangle"><svg class="ico"><use href="#t-rect"/></svg></button>
                <button class="tool" aria-label="Rounded rectangle"><svg class="ico"><use href="#t-round"/></svg></button>
                <button class="tool-more" aria-label="More tools"><svg width="8" height="6" viewBox="0 0 10 8"><path d="M2 .5h6" stroke="#000"/><path d="M1 2.500l3 2.500-3 2.500zM6 2.500L9 5 6 7.500z" fill="#000"/></svg></button>
            </aside>

            <main class="main">
                <div class="tabs">
                    <button class="tab"><svg class="ico"><use href="#page-lines"/></svg>Page1</button>
                    <button class="tab"><svg class="ico"><use href="#code"/></svg>Code</button>
                    <button class="tab active"><svg class="ico"><use href="#page-find"/></svg>Preview</button>
                    <button class="tab"><svg class="ico"><use href="#globe"/></svg>HTML Preview</button>
                </div>

                <div class="preview-bar">
                    <span class="grip"></span>
                    <button class="cmd"><svg class="ico"><use href="#printer"/></svg>Print</button>
                    <button class="cmd"><svg class="ico"><use href="#folder"/></svg>Open</button>
                    <button class="cmd"><svg class="ico"><use href="#disk"/></svg>Save</button>
                    <button class="drop navy" aria-label="Save as"></button>
                    <button class="tb" aria-label="Send by mail"><svg class="ico"><use href="#mail"/></svg></button>
                    <button class="drop navy" aria-label="Send options"></button>
                    <span class="sep"></span>
                    <button class="tb" aria-label="Add page"><svg class="ico"><use href="#page-new"/></svg></button>
                    <button class="tb" aria-label="Remove page"><svg class="ico"><use href="#page-del"/></svg></button>
                    <button class="tb" aria-label="Edit page"><svg class="ico"><use href="#page-edit"/></svg></button>
                    <button class="tb" aria-label="Page size"><svg class="ico"><use href="#page-size"/></svg></button>
                    <span class="sep"></span>
                    <button class="tb" aria-label="Bookmarks"><svg class="ico"><use href="#params"/></svg></button>
                    <button class="tb" aria-label="Thumbnails"><svg class="ico"><use href="#thumbs"/></svg></button>
                    <span class="sep"></span>
                    <button class="tb" aria-label="Find"><svg class="ico"><use href="#find"/></svg></button>
                    <div class="group">
                        <button aria-label="Full screen"><svg class="ico"><use href="#v-single"/></svg></button>
                        <button aria-label="One page"><svg class="ico"><use href="#v-page"/></svg></button>
                        <button aria-label="Two pages"><svg class="ico"><use href="#v-two"/></svg></button>
                        <button aria-label="Multiple pages"><svg class="ico"><use href="#v-many"/></svg></button>
                        <button class="drop navy" aria-label="Page grid"></button>
                        <button aria-label="Page width"><svg class="ico"><use href="#v-width"/></svg></button>
                    </div>
                </div>

                <div class="viewer">
                    <div class="canvas">
                        <article class="paper">
                            <h1>ACCOUNT BALANCES</h1>
                            <table class="report">
                                <colgroup><col class="c-sn"><col class="c-code"><col><col class="c-num"><col class="c-num"></colgroup>
                                <thead>
                                    <tr><th>SN</th><th>Acct. Code</th><th>Title</th><th>Debit</th><th>Credit</th></tr>
                                </thead>
                                <tbody>
                                    <tr><td>1</td><td>1.1</td><td>Capital</td><td>0</td><td>4,990,850</td></tr>
                                    <tr><td>2</td><td>1.2.1</td><td>Ali Akber Enterprises</td><td>2,475,908</td><td>0</td></tr>
                                    <tr><td>3</td><td>1.2.2</td><td>Jafar Brothers</td><td>159,965</td><td>0</td></tr>
                                    <tr><td>4</td><td>1.2.3</td><td>Kisan Supply Services</td><td>0</td><td>1,024,582</td></tr>
                                    <tr><td>5</td><td>1.2.4</td><td>Super Pesticides</td><td>490</td><td>0</td></tr>
                                    <tr><td>6</td><td>2.2.1</td><td>Cash</td><td>2,890</td><td>0</td></tr>
                                    <tr><td>7</td><td>2.2.2.1</td><td>0126201064 ABL</td><td>3,594</td><td>0</td></tr>
                                    <tr><td>8</td><td>2.2.2.3</td><td>1833 Bank Al Flah</td><td>29,691</td><td>0</td></tr>
                                    <tr><td>9</td><td>2.2.2.4</td><td>16505 Askari Bank</td><td>2,219</td><td>0</td></tr>
                                    <tr><td>10</td><td>2.2.2.5</td><td>47752 UBL</td><td>283,934</td><td>0</td></tr>
                                    <tr><td>11</td><td>2.2.3.1</td><td>Cash Sale</td><td>850</td><td>0</td></tr>
                                    <tr><td>12</td><td>2.2.3.10</td><td dir="rtl" lang="ur">پاکستان میڈیکل سٹور</td><td>4,460</td><td>0</td></tr>
                                    <tr><td>13</td><td>2.2.3.101</td><td dir="rtl" lang="ur">ملک برادرز ٹائر ہاؤس</td><td>4,270</td><td>0</td></tr>
                                    <tr><td>14</td><td>2.2.3.103</td><td dir="rtl" lang="ur">محمد محسن <span>150</span> پی معرفت غلام حسین</td><td>5,750</td><td>0</td></tr>
                                    <tr><td>15</td><td>2.2.3.104</td><td dir="rtl" lang="ur">محمد زمان چیمہ</td><td>0</td><td>129,000</td></tr>
                                    <tr><td>16</td><td>2.2.3.105</td><td dir="rtl" lang="ur">محمد انور ندیم</td><td>0</td><td>250</td></tr>
                                    <tr><td>17</td><td>2.2.3.106</td><td dir="rtl" lang="ur">محمد رفیق <span>197</span> پی</td><td>0</td><td>16,800</td></tr>
                                    <tr><td>18</td><td>2.2.3.107</td><td dir="rtl" lang="ur">نوید احمد <span>151</span> پی</td><td>43,535</td><td>0</td></tr>
                                    <tr><td>19</td><td>2.2.3.108</td><td dir="rtl" lang="ur">نذیر احمد <span>262</span> پی</td><td>13,535</td><td>0</td></tr>
                                    <tr><td>20</td><td>2.2.3.11</td><td dir="rtl" lang="ur">جدہ کارپوریشن</td><td>26,905</td><td>0</td></tr>
                                    <tr><td></td><td></td><td></td><td></td><td></td></tr>
                                </tbody>
                            </table>
                        </article>
                    </div>
                    <div class="scroll">
                        <button class="up" aria-label="Scroll up"></button>
                        <span class="thumb"></span>
                        <button class="down" aria-label="Scroll down"></button>
                    </div>
                </div>

                <div class="pager">
                    <div class="group nav">
                        <button aria-label="First page" disabled><svg class="ico" viewBox="0 0 16 16"><path d="M2.500 2.500h2v11h-2z" fill="#b9c3d3" stroke="#98a4b8"/><path d="M12 2v12L6 8z" fill="#a3afc2"/></svg></button>
                        <button aria-label="Previous page" disabled><svg class="ico" viewBox="0 0 16 16"><path d="M11 3v10L5 8z" fill="#a3afc2"/></svg></button>
                        <button class="page-no">Page 1 of 3</button>
                        <button aria-label="Next page"><svg class="ico" viewBox="0 0 16 16"><path d="M5 2v12l6-6z" fill="url(#g-blue)"/></svg></button>
                        <button aria-label="Last page"><svg class="ico" viewBox="0 0 16 16"><path d="M4 2v12l6-6z" fill="url(#g-blue)"/><path d="M10.500 2.500h2v11h-2z" fill="#8db7f3" stroke="#2858b5"/></svg></button>
                    </div>
                    <div class="zoom-panel">
                        <div class="modes">
                            <button aria-label="Single page"><svg class="ico" viewBox="0 0 16 16"><path d="M3.500 2.500h9v11h-9z" fill="url(#g-paper)" stroke="#6e94cf"/></svg></button>
                            <button aria-label="Continuous"><svg class="ico" viewBox="0 0 16 16"><path d="M3.500 2v4.500h9V2M3.500 14V9.500h9V14" fill="#eef4fd" stroke="#5d83c2"/></svg></button>
                            <button class="sel" aria-label="Facing pages"><svg class="ico" viewBox="0 0 16 16"><path d="M2.500 2v4.500h4V2M9.500 2v4.500h4V2M2.500 14V9.500h4V14M9.500 14V9.500h4V14" fill="#fff3d6" stroke="#8493b5"/></svg></button>
                        </div>
                        <label for="zoom">100%</label>
                        <button aria-label="Zoom out"><svg class="ico" viewBox="0 0 16 16"><circle cx="8" cy="8" r="7.300" fill="#e4eefb" stroke="#5b6f92"/><path d="M4 8h8" stroke="#3d4c69" stroke-width="2"/></svg></button>
                        <input id="zoom" type="range" min="0" max="200" value="100">
                        <button aria-label="Zoom in"><svg class="ico" viewBox="0 0 16 16"><circle cx="8" cy="8" r="7.300" fill="#e4eefb" stroke="#5b6f92"/><path d="M4 8h8M8 4v8" stroke="#3d4c69" stroke-width="2"/></svg></button>
                    </div>
                </div>

                <div class="refresh-row">
                    <div class="progress"></div>
                    <button class="push" disabled>Stop</button>
                    <button class="push">Refresh</button>
                    <label class="check"><input type="checkbox" checked>Auto Refresh</label>
                </div>

                <div class="dock">
                    <button class="dock-tab"><svg class="ico"><use href="#messages"/></svg>Messages</button>
                </div>
            </main>
        </div>

        <footer class="status">
            <span class="grip"></span>
            <button class="units">Inches</button>
            <span class="sep"></span>
            <span class="page-name">Page1</span>
            <span class="sep"></span>
        </footer>
    </div>

    <div class="taskbar">
        <button class="task start" aria-label="Start"><svg width="38" height="38" viewBox="0 0 38 38"><circle cx="19" cy="19" r="18" fill="url(#g-orb)" stroke="#8fb2cc"/><path d="M3 15a17 17 0 0 1 32 0q-16 6-32 0z" fill="#fff" opacity=".3"/><path d="M11 11q4-3 8 0l-1.500 7q-4-2-8.500 0z" fill="#ec6a2c"/><path d="M20.500 12q4 2 8.500-1l-2 8q-4.500 2-8-.5z" fill="#96c83c"/><path d="M8.500 20q4.500-2 8.500.5l-2 7q-4-3-8.500 0z" fill="#6fb8f2"/><path d="M18.500 21q4 2 8.500 0l-2 7q-4.500 2-8.500-.5z" fill="#fbcb3a"/></svg></button>
        <button class="task" aria-label="Dolphin"><svg width="32" height="34" viewBox="0 0 32 34"><path d="M2 4q4-3 9-2l5 1q4-2 6-1 1 2 0 3l7-2q0 3-3 5 3 7 0 13-4 6-12 7l-3 4-8 1 4-3-5-5q6-1 9 1 6-1 7-6-3 1-5-1 3-2 3-5-1-3-4-4-3 1-5-1 1-1 0-2-2-1-5-3z" fill="url(#g-dolphin)" stroke="#4a4794" stroke-width=".6"/><path d="M12 3q6 1 9 5 3 6 0 12 0-9-9-17z" fill="#d5d4fa" opacity=".6"/><circle cx="11" cy="5" r="1" fill="#333"/></svg></button>
        <button class="task" aria-label="Media player"><svg width="28" height="32" viewBox="0 0 28 32"><path d="M4 22h20l3 8H1z" fill="url(#g-cone)" stroke="#c75c00"/><path d="M12.500 2q1.500-1.500 3 0l6.500 22q-8 4-16 0z" fill="url(#g-cone)"/><path d="M11.300 6h5.400l1.300 5h-8zM8.500 16h11l1.500 5q-7 3-14 0z" fill="#e6e8ea"/></svg></button>
        <button class="task" aria-label="Calculator"><svg width="26" height="32" viewBox="0 0 26 32"><rect x="2" y="1" width="22" height="30" rx="1" fill="#8ebbe0" stroke="#dceefa"/><path d="M4 3h18v2H4z" fill="#e98d2b"/><path d="M4 5h18v9H4z" fill="#dcebf8"/><rect x="17" y="7.500" width="3" height="4.500" rx="1" fill="none" stroke="#445"/><path d="M4 18h14M4 21.500h14M4 25h14M4 28.500h14" stroke="#eef6fc" stroke-width="2.400" stroke-dasharray="2.500 1"/><path d="M19 17h3v5h-3z" fill="#eef6fc"/><path d="M19 23h3v6h-3z" fill="#f0a02f"/></svg></button>
        <button class="task open" aria-label="Firefox"><svg width="34" height="34" viewBox="0 0 34 34"><circle cx="18" cy="15" r="13" fill="url(#g-sky)"/><path d="M24 3q8 4 9 12 0 8-5 12-3 4-9 5 9-6 8-16 2 1 1-4 1-5-4-9z" fill="#f9b931"/><path d="M3 6q1 2 4 3 3-3 8-3-3 2-3 4 3 1 5 3l-5 3q0 3-2 3 3 5 9 3 3 0 4 2-3 2-6 2 7 1 10-3-2 9-11 10Q5 32 2 20q-1-8 1-14z" fill="url(#g-fox)"/></svg></button>
        <button class="task" aria-label="Explorer"><svg width="34" height="32" viewBox="0 0 34 32"><path d="M2 4h11l2 3h15v19H2z" fill="#efd67c" stroke="#b8973c"/><path d="M5 2h7v3H5zM14 5h9v3h-9zM22 7h9v3h-9z" fill="#fff"/><path d="M7 2h3v2H7z" fill="#3aa83e"/><path d="M16 5h3v2h-3z" fill="#d04a37"/><path d="M26 7h4v2h-4z" fill="#4a8fdb"/><path d="M2 9h13l2 2h15v17H2z" fill="#fae8a2" stroke="#d3b65e"/><path d="M6 31v-9q0-3 3-3h16q3 0 3 3v9h-5v-7H11v7z" fill="#8ccbe8" stroke="#4a94b8"/></svg></button>
        <button class="task open active" aria-label="Designer"><svg width="32" height="32"><use href="#designer"/></svg></button>

        <div class="tray">
            <span class="lang">EN</span>
            <button class="tray-up" aria-label="Show hidden icons"></button>
            <svg class="ico" viewBox="0 0 16 16"><path d="M2.500 2.500h7v12h-7zM4 1h4" fill="none" stroke="#fff" stroke-width="1.400"/><path d="M4.500 5v7M6.500 5v7" stroke="#fff"/><path d="M8 5h7v3q0 2-2.500 2.500V14h-2v-3.500Q8 10 8 8z" fill="#fff" stroke="#14181f" stroke-width=".6"/><path d="M10 2.500V5M13 2.500V5" stroke="#fff"/></svg>
            <svg class="ico" viewBox="0 0 16 16"><path d="M5 4.500h10v7H5v-4M7 14h7" fill="#14181f" stroke="#fff" stroke-width="1.400"/><path d="M1 2h5v3q0 1-2.500 1T1 5zM2 0v2M5 0v2M3.500 6v3" fill="#fff" stroke="#fff"/></svg>
            <svg class="ico" viewBox="0 0 16 16"><path d="M1 5.500h2L7 1v14l-4-4.500H1z" fill="#fff"/><path d="M9 5.500q2 2.500 0 5M11 3.500q4 4.500 0 9" fill="none" stroke="#dde" stroke-width="1.200"/></svg>
            <div class="clock"><span>2:08 PM</span><span>25-03-2010</span></div>
            <button class="peek" aria-label="Show desktop"></button>
        </div>
    </div>
</body>
</html>
```
FILE: styles.css
```css
* {
    box-sizing: border-box;
}

body {
    margin: 0;
    height: 100vh;
    display: flex;
    flex-direction: column;
    overflow: hidden;
    background: #bfdbff;
    color: #15428b;
    font-family: "Open Sans", "Noto Sans", sans-serif;
    font-size: 11px;
    line-height: 16px;
}

button, input, select {
    margin: 0;
    padding: 0;
    border: 0;
    border-radius: 0;
    background: none;
    color: inherit;
    font: inherit;
}

.sprite {
    position: absolute;
}

.ico {
    display: block;
    flex: none;
    width: 16px;
    height: 16px;
}

.app {
    flex: 1;
    min-height: 0;
    display: flex;
    flex-direction: column;
}

/* title bar */
.titlebar {
    display: flex;
    align-items: center;
    height: 22px;
    flex: none;
    gap: 5px;
    border-bottom: 1px solid #2c4770;
    color: #000;
    font-size: 12px;
    background: linear-gradient(115deg, #a5bce0 0, #b6c9e8 12%, #7f9fd3 20%, #5f88c8 27%, #86a6db 34%, #5780c2 42%, #4a78bf 52%, #6b93d2 58%, #5280c6 66%, #3665ae 76%, #5d85c2 84%, #8fa9d3 90%, #405a88 94%, #6b7fa8 100%);
}

.caption {
    text-shadow: 0 0 6px #fff, 0 0 8px #fff, 0 0 10px #fff;
}

.win-buttons {
    display: flex;
    align-self: flex-start;
    margin-left: auto;
    margin-right: 2px;
    border: 1px solid #2b3448;
    border-top: 0;
    border-radius: 0 0 5px 5px;
    overflow: hidden;
}

.win-buttons button {
    display: flex;
    align-items: center;
    justify-content: center;
    width: 27px;
    height: 18px;
    border-right: 1px solid #2b3448;
    background: linear-gradient(#b9c3d3, #7d8aa3 45%, #44516b 50%, #7f8da8);
    box-shadow: inset 0 0 1px #fff;
}

.win-buttons .close {
    width: 47px;
    border-right: 0;
    background: linear-gradient(#dfa495, #cd6350 45%, #b5301a 50%, #dc7a55);
}

/* menu */
.menubar {
    display: flex;
    flex: none;
    height: 25px;
    align-items: center;
    padding-left: 5px;
    font-size: 12px;
}

.menubar button {
    padding: 0 8px;
    margin-right: 2px;
}

/* toolbars */
.bars {
    display: flex;
    flex-direction: column;
    flex: none;
    gap: 1px;
}

.bar-row {
    display: flex;
    gap: 3px;
}

.toolbar {
    display: flex;
    align-items: center;
    height: 27px;
    border-bottom: 1px solid #6f9cdc;
    border-radius: 3px;
    background: linear-gradient(#e4f0ff, #d6e6fd 50%, #bcd6fb 85%, #aecdf9);
}

.grip {
    flex: none;
    align-self: center;
    width: 3px;
    height: 18px;
    margin: 0 2px 0 3px;
    background: repeating-linear-gradient(#6f9ade 0 2px, transparent 2px 5px) no-repeat 0 0 / 2px 100%;
}

.tb, .tool {
    display: flex;
    align-items: center;
    justify-content: center;
    flex: none;
    width: 25px;
    height: 23px;
}

.on {
    border: 1px solid #c2622a;
    background: linear-gradient(#ffc76e, #ffd67d);
}

.sep {
    flex: none;
    align-self: center;
    width: 1px;
    height: 18px;
    margin: 0 1px;
    background: #fff;
    box-shadow: -1px 0 #b3cdf2;
}

.drop {
    display: flex;
    align-items: center;
    justify-content: center;
    flex: none;
    width: 12px;
    height: 23px;
    color: #000;
}

.drop::before {
    content: "";
    border: 3px solid transparent;
    border-top-color: currentColor;
    border-bottom: 0;
}

.drop.navy {
    color: #15428b;
}

.drop:disabled {
    color: #8391a8;
}

.zoom-box {
    display: flex;
    align-items: center;
    justify-content: space-between;
    width: 70px;
    height: 23px;
    margin-left: 2px;
    padding: 0 2px;
    border: 1px solid #abc5ea;
    background: #eaf2fb;
}

.zoom-box input {
    width: 31px;
    height: 15px;
    background: #3399ff;
    color: #fff;
    font-size: 12px;
}

.close-btn {
    width: 69px;
    height: 23px;
    padding-left: 2px;
    color: #000;
    font-size: 12px;
}

.more {
    display: flex;
    flex-direction: column;
    align-items: center;
    justify-content: flex-end;
    gap: 1px;
    width: 11px;
    height: 26px;
    padding-bottom: 5px;
    border-radius: 0 3px 3px 0;
    background: linear-gradient(#c2dafa, #a5c5f1 50%, #6f9bdc);
}

.more::before {
    content: "";
    width: 5px;
    height: 1px;
    background: #000;
}

.more::after {
    content: "";
    border: 3px solid transparent;
    border-top-color: #000;
    border-bottom: 0;
}

.more.spaced {
    margin-left: 6px;
}

.line-style {
    width: 61px;
    height: 15px;
    margin: 0 3px 0 4px;
    border: 1px solid #000;
    background: #fff;
}

.line-style span {
    display: block;
    height: 2px;
    background: #000;
}

.style-box {
    width: 68px;
    height: 21px;
    border: 1px solid #b9c2cf;
    background: #fff;
}

.combo {
    position: relative;
    height: 22px;
    margin: 0 2px;
}

.combo.font {
    width: 130px;
}

.combo.size {
    width: 50px;
    margin-left: 3px;
}

.combo select {
    width: 100%;
    height: 100%;
    appearance: none;
    border: 1px solid #abc5ea;
    background: #f0f0f0;
    opacity: 1;
}

.combo::after {
    content: "";
    position: absolute;
    top: 10px;
    right: 5px;
    border: 3px solid transparent;
    border-top-color: #8d8d8d;
    border-bottom: 0;
}

.letter {
    color: #76849a;
    font-family: "Liberation Serif", serif;
    font-size: 15px;
}

.letter i, .letter u {
    font-weight: bold;
}

.letter.color {
    width: 19px;
    height: 19px;
    margin: 0 3px;
    border-bottom: 3px solid #e6effc;
    font-size: 17px;
    line-height: 14px;
}

.marker {
    position: relative;
}

.marker span {
    position: absolute;
    left: 3px;
    top: 1px;
    color: #000;
    font-size: 10px;
}

/* toolbox */
.workspace {
    flex: 1;
    min-height: 0;
    display: flex;
}

.toolbox {
    display: flex;
    flex-direction: column;
    flex: none;
    width: 28px;
    border-radius: 3px;
    overflow: hidden;
    background: linear-gradient(#e2eeff, #d2e4fd 50%, #aacbfa);
}

.grip-h {
    flex: none;
    width: 22px;
    height: 2px;
    margin: 3px;
    background: repeating-linear-gradient(90deg, #6f9ade 0 2px, transparent 2px 5px);
}

.tool {
    width: 26px;
    margin-left: 1px;
}

.tool.sub {
    flex-direction: column;
    height: 33px;
    gap: 3px;
    padding-top: 4px;
}

.tool.sub::after {
    content: "";
    margin-left: 2px;
    border: 4px solid transparent;
    border-left: 4px solid #000;
    border-right: 0;
}

.sep-h {
    flex: none;
    height: 1px;
    margin: 1px 2px;
    background: #fff;
    box-shadow: 0 -1px #b3cdf2;
}

.tool-more {
    display: flex;
    align-items: center;
    justify-content: center;
    height: 12px;
    margin: auto 0 1px;
    background: linear-gradient(#a9c6f0, #7fa5dd);
}

/* main column */
.main {
    flex: 1;
    min-width: 0;
    display: flex;
    flex-direction: column;
    margin-left: 2px;
}

.tabs {
    display: flex;
    align-items: flex-end;
    flex: none;
    height: 25px;
    border-bottom: 1px solid #8b9fc4;
    background: linear-gradient(#e3efff, #b8d3fa);
}

.tab {
    position: relative;
    z-index: 1;
    display: flex;
    align-items: center;
    gap: 4px;
    height: 22px;
    margin-right: 10px;
    padding: 0 0 2px 2px;
    border: 1px solid #8ba3cc;
    border-width: 1px 0 0 1px;
    border-radius: 4px 0 0 0;
    background: #cfe1fa;
}

.tab::after {
    content: "";
    position: absolute;
    z-index: -1;
    left: calc(100% - 8px);
    top: -1px;
    bottom: 0;
    width: 21px;
    border: 1px solid #8ba3cc;
    border-width: 1px 1px 0 0;
    border-radius: 0 5px 0 0;
    background: inherit;
    transform: skewX(32deg);
    transform-origin: bottom;
}

.tab.active {
    z-index: 2;
    margin-right: 7px;
    padding-left: 3px;
    padding-right: 3px;
    background: #fff;
    font-weight: bold;
}

.preview-bar {
    display: flex;
    align-items: center;
    flex: none;
    height: 28px;
    border-bottom: 1px solid #6f9cdc;
    background: linear-gradient(#e4f0ff, #d6e6fd 55%, #abcdf9);
}

.cmd {
    display: flex;
    align-items: center;
    gap: 4px;
    height: 23px;
    margin-right: 3px;
    padding: 0 4px;
}

.group {
    display: flex;
    flex: none;
    height: 22px;
    margin-left: 4px;
    border: 1px solid #7ea2d6;
    border-radius: 2px;
}

.group button {
    display: flex;
    align-items: center;
    justify-content: center;
    width: 24px;
    height: 20px;
    border-right: 1px solid #a3c0ea;
}

.group button:last-child {
    border-right: 0;
    width: 22px;
}

.group .drop {
    width: 14px;
}

/* report viewer */
.viewer {
    flex: 1;
    min-height: 0;
    display: flex;
    border-bottom: 1px solid #d8e4f4;
}

.canvas {
    flex: 1;
    min-width: 0;
    overflow: hidden;
    padding-right: 6px;
    border-left: 1px solid #6a6a6a;
    border-top: 2px solid #6a6a6a;
    background: #97b5df;
}

.paper {
    width: 851px;
    margin: 0 auto;
    padding: 7px 38px 0 98px;
    border: 2px solid #ffd84d;
    border-width: 0 2px;
    background: #fff;
    box-shadow: 2px 0 2px #4f6892;
    color: #000;
    font-family: "Liberation Sans", Arial, sans-serif;
}

.paper h1 {
    margin: 0 0 11px;
    font-size: 16px;
    line-height: 20px;
    text-align: center;
}

.report {
    width: 100%;
    table-layout: fixed;
    border-collapse: collapse;
}

.report .c-sn {
    width: 60px;
}

.report .c-code, .report .c-num {
    width: 100px;
}

.report th, .report td {
    height: 20px;
    padding: 0 7px 2px 6px;
    border: 1px solid #000;
    font-size: 11px;
    line-height: 16px;
    text-align: left;
}

.report th {
    padding-bottom: 0;
    font-size: 12px;
    text-align: center;
}

.report td:first-child {
    text-align: center;
}

.report td:nth-child(n+4) {
    text-align: right;
}

.report td[lang="ur"] {
    font-family: "Liberation Sans", "DejaVu Sans", sans-serif;
    font-size: 9px;
}

.report td span {
    font-size: 11px;
    line-height: 1;
}

.scroll {
    display: flex;
    flex-direction: column;
    align-items: center;
    flex: none;
    width: 18px;
    background: linear-gradient(90deg, #e3e6ea, #f7f7f8 30%, #f0f0f2);
    border-left: 1px solid #fff;
}

.scroll button {
    display: flex;
    align-items: center;
    justify-content: center;
    width: 17px;
    height: 17px;
}

.scroll button::before {
    content: "";
    border: 5px solid transparent;
}

.scroll .up::before {
    border-bottom-color: #48597d;
    border-top: 0;
}

.scroll .down::before {
    border-top-color: #48597d;
    border-bottom: 0;
}

.thumb {
    width: 14px;
    height: 51px;
    margin: 13px 0 auto;
    border: 1px solid #566a92;
    border-radius: 2px;
    background: repeating-linear-gradient(#6d7686 0 1px, transparent 1px 2px) no-repeat center / 9px 7px, linear-gradient(90deg, #f0f4f9, #cfdaea);
}

/* page navigation and zoom */
.pager {
    display: flex;
    align-items: stretch;
    justify-content: space-between;
    flex: none;
    height: 27px;
    border-top: 1px solid #6089be;
    background: linear-gradient(#d5e5fb, #c9def9 38%, #b0cdf3 40%, #d3e4fb);
}

.nav {
    align-self: center;
    margin-left: 1px;
}

.nav .page-no {
    width: 71px;
}

.zoom-panel {
    display: flex;
    align-items: center;
    padding: 0 14px 0 5px;
    border-left: 1px solid #567fb8;
    background: linear-gradient(#b9d3f6, #9dbfee 38%, #85a9dc 40%, #7d9fd0);
    font-size: 12px;
}

.modes {
    display: flex;
    margin-right: 5px;
    border: 1px solid #b5cff2;
}

.modes button {
    display: flex;
    align-items: center;
    justify-content: center;
    width: 22px;
    height: 18px;
    background: #c5daf7;
    border-right: 1px solid #a9c5ec;
}

.modes .sel {
    background: linear-gradient(#ffc483, #ffdf9a);
}

.zoom-panel label {
    width: 30px;
    margin-right: 7px;
}

.zoom-panel input {
    appearance: none;
    width: 96px;
    height: 16px;
    background: linear-gradient(#5c79a8, #5c79a8) no-repeat center / 100% 1px;
}

.zoom-panel input::-webkit-slider-thumb {
    appearance: none;
    width: 9px;
    height: 13px;
    border: 1px solid #44618f;
    border-radius: 1px 1px 5px 5px;
    background: linear-gradient(#8fa6cb, #8fa6cb) no-repeat center 2px / 1px 5px, #eef5fe;
}

/* refresh row */
.refresh-row {
    display: flex;
    align-items: center;
    flex: none;
    height: 24px;
}

.progress {
    width: 151px;
    height: 18px;
    margin-right: 1px;
    border: 1px solid #fff;
    border-top-color: #9a9a9a;
    background: #f0eeee;
}

.push {
    width: 96px;
    height: 20px;
    margin-right: 8px;
    border: 1px solid #5b82ba;
    border-radius: 2px;
    background: linear-gradient(#d3e4fd, #bdd6fb 48%, #a4c7fa 50%, #b9d6ff);
}

.push:disabled {
    border-color: #7ea2d6;
    background: linear-gradient(#eef1f6, #dfe4ec 50%, #d3dae5 52%, #e3e9f2);
    color: #8d8d8d;
}

.check {
    display: flex;
    align-items: center;
    gap: 5px;
    margin-left: 3px;
}

.check input {
    appearance: none;
    width: 13px;
    height: 13px;
    border: 1px solid #8e97a5;
    background: linear-gradient(135deg, #cfd5de, #fff);
}

.check input:checked::before {
    content: "";
    display: block;
    width: 3px;
    height: 6px;
    margin: 0 auto;
    border: solid #44597f;
    border-width: 0 2px 2px 0;
    box-sizing: content-box;
    transform: rotate(40deg);
}

.dock {
    display: flex;
    align-items: flex-end;
    flex: none;
    height: 26px;
    border-top: 1px solid #dbe8fa;
    background: linear-gradient(#e3efff, #aaccfa);
}

.dock-tab {
    display: flex;
    align-items: center;
    gap: 4px;
    height: 24px;
    margin-left: 1px;
    padding: 0 5px 0 2px;
    border: 1px solid #6d94cf;
    border-bottom: 0;
    border-radius: 3px 3px 0 0;
    background: linear-gradient(#dceafe, #b3d2fc);
    color: #000;
}

/* status bar */
.status {
    display: flex;
    align-items: center;
    flex: none;
    height: 28px;
    padding-bottom: 2px;
    border-top: 1px solid #567db5;
    background: linear-gradient(#d8e7fc, #c9def9 36%, #b5d1f6 38%, #dbe9fd);
}

.status .sep {
    margin: 0 4px 0 5px;
}

.units {
    display: flex;
    align-items: center;
    gap: 10px;
    margin-left: 7px;
    color: #000;
    font-size: 12px;
}

.units::after {
    content: "";
    border: 3px solid transparent;
    border-bottom-color: #000;
    border-top: 0;
}

.page-name {
    margin-right: 4px;
}

/* taskbar */
.taskbar {
    display: flex;
    align-items: center;
    flex: none;
    height: 40px;
    border-top: 1px solid #5c6874;
    background: linear-gradient(50deg, transparent 80%, #4b5967 82%, #3a4550 84%, #5d6b7a 86%, transparent 89%), linear-gradient(#1a2027, #06080c 40%, #0c1016);
    color: #fff;
}

.task {
    display: flex;
    align-items: center;
    justify-content: center;
    flex: none;
    width: 58px;
    height: 39px;
    margin-right: 4px;
}

.start {
    width: 54px;
    margin-right: 6px;
}

.task.open {
    border: 1px solid #74797f;
    border-radius: 3px;
    background: linear-gradient(135deg, #5b5f64, #23272c 45%, #15181c);
}

.task.active {
    background: linear-gradient(135deg, #c9cbcd, #8f9296 40%, #6c7075);
    border-color: #b8bbbe;
}

.tray {
    display: flex;
    align-items: center;
    gap: 8px;
    margin-left: auto;
}

.lang {
    margin-right: 8px;
    font-size: 12px;
}

.tray-up::before {
    content: "";
    display: block;
    margin-right: 4px;
    border: 4px solid transparent;
    border-bottom-color: #fff;
    border-top: 0;
}

.clock {
    display: flex;
    flex-direction: column;
    align-items: center;
    margin: 0 3px 0 10px;
}

.peek {
    width: 13px;
    height: 39px;
    margin-left: 2px;
    border: 1px solid #59616b;
    background: linear-gradient(135deg, #5f666e, #15181d 60%);
}
```
